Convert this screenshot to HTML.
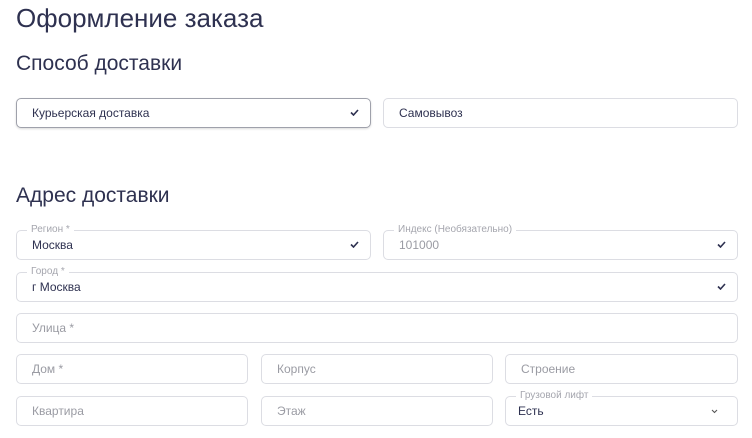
<!DOCTYPE html>
<html><head><meta charset="utf-8"><style>
*{box-sizing:border-box;margin:0;padding:0}
body{width:752px;height:438px;overflow:hidden;background:#fff;font-family:"Liberation Sans",sans-serif;color:#2e3150;position:relative}
.t{position:absolute;left:16px;font-weight:normal;color:#2e3150}
.b{position:absolute;border:1px solid #dcdde3;border-radius:5px;height:30px;font-size:12px;color:#9a9ba3;padding-left:15px;line-height:28px}
.b.v{color:#2e3150}
.b.sel{border-color:#9fa1ab;box-shadow:0 1px 2px rgba(0,0,0,.15)}
.l{position:absolute;top:-7px;left:10px;background:#fff;padding:0 4px;font-size:10px;line-height:12px;color:#a5a6ae}
.val{position:absolute;top:7px;left:15px;line-height:14px}
.ck{position:absolute;right:11px;top:10px;width:9px;height:7px}
</style></head><body>
<div class="t" style="top:3px;font-size:26px">Оформление заказа</div>
<div class="t" style="top:52px;font-size:21px">Способ доставки</div>
<div class="b v sel" style="left:16px;top:98px;width:355px">Курьерская доставка<svg class="ck" viewBox="0 0 9 7"><path d="M1 3.5L3.5 6L8 1" stroke="#2e3150" stroke-width="1.6" fill="none"/></svg></div>
<div class="b v" style="left:383px;top:98px;width:355px">Самовывоз</div>
<div class="t" style="top:184px;font-size:21px">Адрес доставки</div>
<div class="b v" style="left:16px;top:230px;width:355px"><span class="l">Регион *</span><span class="val">Москва</span><svg class="ck" viewBox="0 0 9 7"><path d="M1 3.5L3.5 6L8 1" stroke="#2e3150" stroke-width="1.6" fill="none"/></svg></div>
<div class="b" style="left:383px;top:230px;width:355px"><span class="l">Индекс (Необязательно)</span><span class="val" style="color:#9a9ba3">101000</span><svg class="ck" viewBox="0 0 9 7"><path d="M1 3.5L3.5 6L8 1" stroke="#2e3150" stroke-width="1.6" fill="none"/></svg></div>
<div class="b v" style="left:16px;top:272px;width:722px"><span class="l">Город *</span><span class="val">г Москва</span><svg class="ck" viewBox="0 0 9 7"><path d="M1 3.5L3.5 6L8 1" stroke="#2e3150" stroke-width="1.6" fill="none"/></svg></div>
<div class="b" style="left:16px;top:313px;width:722px">Улица *</div>
<div class="b" style="left:16px;top:354px;width:232px">Дом *</div>
<div class="b" style="left:261px;top:354px;width:232px">Корпус</div>
<div class="b" style="left:505px;top:354px;width:233px">Строение</div>
<div class="b" style="left:16px;top:396px;width:232px">Квартира</div>
<div class="b" style="left:261px;top:396px;width:232px">Этаж</div>
<div class="b v" style="left:505px;top:396px;width:233px"><span class="l">Грузовой лифт</span><span class="val" style="left:12px">Есть</span><svg style="position:absolute;right:19px;top:12px" width="7" height="5" viewBox="0 0 7 5"><path d="M1 1L3.5 3.5L6 1" stroke="#555" stroke-width="1.1" fill="none"/></svg></div>
</body></html>
